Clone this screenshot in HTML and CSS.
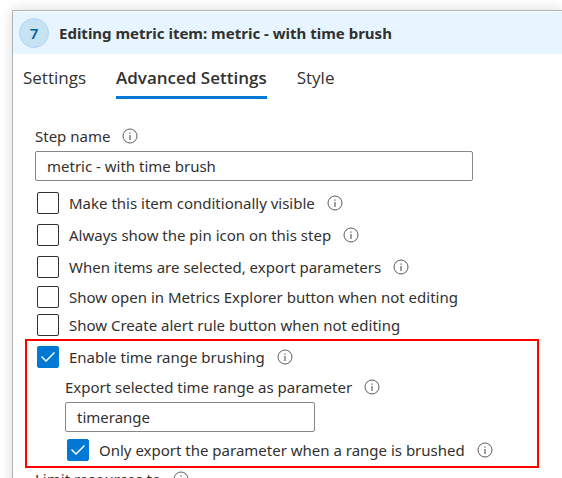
FILE: index.html
```html
<!DOCTYPE html>
<html lang="en">
<head>
<meta charset="utf-8">
<title>Editing metric item</title>
<link rel="stylesheet" href="styles.css">
</head>
<body>
<svg class="sprite" aria-hidden="true">
  <symbol id="info" viewBox="0 0 16 16">
    <circle cx="8" cy="8" r="7" fill="none" stroke="currentColor"/>
    <path d="M8 7v5M8 4.5v1.2" fill="none" stroke="currentColor" stroke-width="1.2"/>
  </symbol>
</svg>
<main class="panel">
  <header class="panel-header">
    <span class="step-number">7</span>
    <h1 class="title">Editing metric item: metric - with time brush</h1>
  </header>
  <nav class="tabs">
    <a class="tab" href="#settings">Settings</a>
    <a class="tab tab-active" href="#advanced" aria-current="page">Advanced Settings</a>
    <a class="tab" href="#style">Style</a>
  </nav>
  <form class="form">
    <div class="label-row">
      <label for="step-name">Step name</label>
      <svg class="info"><use href="#info"/></svg>
    </div>
    <input class="text-input" id="step-name" type="text" value="metric - with time brush">
    <div class="options">
      <div class="check-row">
        <input class="check" id="conditional" type="checkbox">
        <label for="conditional">Make this item conditionally visible</label>
        <svg class="info"><use href="#info"/></svg>
      </div>
      <div class="check-row">
        <input class="check" id="pin" type="checkbox">
        <label for="pin">Always show the pin icon on this step</label>
        <svg class="info"><use href="#info"/></svg>
      </div>
      <div class="check-row">
        <input class="check" id="export" type="checkbox">
        <label for="export">When items are selected, export parameters</label>
        <svg class="info"><use href="#info"/></svg>
      </div>
      <div class="check-row compact">
        <input class="check" id="explorer" type="checkbox">
        <label for="explorer">Show open in Metrics Explorer button when not editing</label>
      </div>
      <div class="check-row compact">
        <input class="check" id="alert" type="checkbox">
        <label for="alert">Show Create alert rule button when not editing</label>
      </div>
    </div>
    <section class="highlight">
      <div class="check-row">
        <input class="check" id="brushing" type="checkbox" checked>
        <label for="brushing">Enable time range brushing</label>
        <svg class="info"><use href="#info"/></svg>
      </div>
      <div class="nested">
        <div class="label-row">
          <label for="range">Export selected time range as parameter</label>
          <svg class="info"><use href="#info"/></svg>
        </div>
        <input class="text-input" id="range" type="text" value="timerange">
        <div class="check-row">
          <input class="check" id="only-brushed" type="checkbox" checked>
          <label for="only-brushed">Only export the parameter when a range is brushed</label>
          <svg class="info"><use href="#info"/></svg>
        </div>
      </div>
    </section>
    <div class="label-row">
      <span>Limit resources to</span>
      <svg class="info"><use href="#info"/></svg>
    </div>
  </form>
</main>
</body>
</html>
```
FILE: styles.css
```css
* { box-sizing: border-box; }

body {
  height: 100vh;
  margin: 0;
  padding: 10px 0 0 12px;
  overflow: hidden;
  background: #fff;
  color: #323130;
  font: 15px/22px "Noto Sans", "Open Sans", sans-serif;
}

.sprite { display: none; }

.panel {
  border: solid #b3b3b3;
  border-width: 1px 0 0 1px;
  background: #fff;
  box-shadow: 0 0 12px rgba(0, 0, 0, 0.15);
}

.panel-header {
  display: flex;
  align-items: center;
  gap: 10px;
  height: 42px;
  margin-top: 1px;
  padding: 0 6px;
  background: #e6f5ff;
}

.step-number {
  width: 30px;
  height: 30px;
  border: 1px solid #b3d1ff;
  border-radius: 50%;
  background: #c7e3f2;
  color: #0060aa;
  font-weight: 600;
  line-height: 28px;
  text-align: center;
}

.title {
  margin: 0;
  font-size: 15px;
  font-weight: 700;
  line-height: 22px;
}

.tabs {
  display: flex;
  gap: 30px;
  padding: 8px 10px 0;
  font-family: "Open Sans", "Noto Sans", sans-serif;
}

.tab {
  height: 37px;
  border-bottom: 3px solid transparent;
  color: inherit;
  font-size: 17px;
  line-height: 32px;
  text-decoration: none;
}

.tab-active {
  border-color: #0078d4;
  font-weight: 600;
}

.form { padding: 26px 23px 0 12px; }

.label-row,
.check-row {
  display: flex;
  align-items: center;
}

.label-row {
  height: 22px;
  padding-left: 10px;
}

.check-row {
  height: 32px;
  padding-left: 12px;
}

.compact { height: 28px; }

.info {
  width: 16px;
  height: 16px;
  margin-left: 12px;
  color: #605e5c;
}

.text-input {
  display: block;
  width: 438px;
  max-width: 100%;
  height: 30px;
  margin: 4px 0 0 10px;
  padding: 0 11px;
  border: 1px solid #8a8886;
  border-radius: 2px;
  background: #fff;
  color: inherit;
  font: inherit;
}

.options { margin-top: 6px; }

.check {
  flex: none;
  width: 22px;
  height: 22px;
  margin: 0 10px 0 0;
  border: 1px solid #323130;
  border-radius: 2px;
  background: #fff;
  appearance: none;
}

.check:checked {
  display: grid;
  place-items: center;
  border-color: #0078d4;
  background: #0078d4;
}

.check:checked::before {
  content: "";
  width: 14px;
  height: 10px;
  background: #fff;
  clip-path: polygon(0 5px, 1px 4px, 5px 8px, 13px 0, 14px 1px, 5px 10px);
}

.highlight {
  border: 2px solid #f00;
}

.highlight > .check-row { padding-left: 10px; }

.nested {
  padding: 3px 0 0 28px;
}

.nested .text-input {
  width: 250px;
  margin-bottom: 2px;
}
```
